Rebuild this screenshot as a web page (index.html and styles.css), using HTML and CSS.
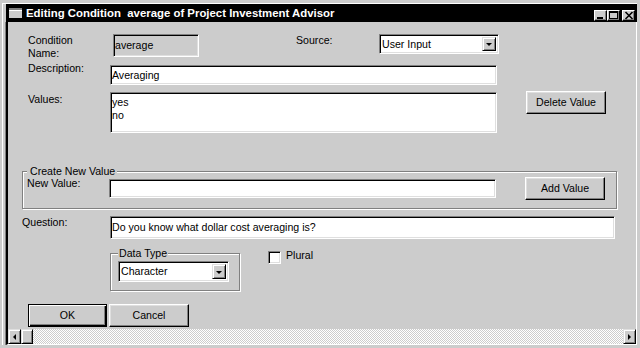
FILE: index.html
```html
<!DOCTYPE html>
<html lang="en">
  <head>
    <meta charset="UTF-8" />
    <title>Editing Condition</title>
    <link rel="stylesheet" href="styles.css">
  </head>
  <body>
    <div class="window">
      <div class="titlebar">
        <span class="app-icon"></span>
        <span class="title">Editing Condition&nbsp; average of Project Investment Advisor</span>
        <div class="caption-btns">
          <span class="cbtn">
            <svg width="11" height="9" viewBox="0 0 11 9"><rect x="2" y="6" width="6" height="2" fill="#000"/></svg>
          </span>
          <span class="cbtn">
            <svg width="11" height="9" viewBox="0 0 11 9"><rect x="1.5" y="0.5" width="8" height="7" fill="none" stroke="#000"/><rect x="1" y="0" width="9" height="2" fill="#000"/></svg>
          </span>
          <span class="cbtn close">
            <svg width="10" height="9" viewBox="0 0 10 9"><path d="M1.5 1 L8.5 8 M8.5 1 L1.5 8" stroke="#000" stroke-width="1.6"/></svg>
          </span>
        </div>
      </div>

      <div class="panel">
        <div class="form">
          <div class="row row-name">
            <div class="lbl in">Condition<br />Name:</div>
            <div class="field readonly name-field">average</div>
            <div class="lbl source-lbl">Source:</div>
            <div class="combo source-combo">
              <span class="combo-text">User Input</span>
              <span class="drop-btn"><span class="tri-down"></span></span>
            </div>
          </div>

          <div class="row row-desc">
            <div class="lbl in up">Description:</div>
            <div class="field wide">Averaging</div>
          </div>

          <div class="row row-values">
            <div class="lbl in down">Values:</div>
            <div class="field wide listbox">yes<br />no</div>
            <button class="btn side-btn delete-btn">Delete Value</button>
          </div>

          <fieldset class="group new-value">
            <legend>Create New Value</legend>
            <div class="row">
              <div class="lbl">New Value:</div>
              <div class="field wide new-field"></div>
              <button class="btn side-btn">Add Value</button>
            </div>
          </fieldset>

          <div class="row row-question">
            <div class="lbl">Question:</div>
            <div class="field question-field">Do you know what dollar cost averaging is?</div>
          </div>

          <div class="row row-type">
            <fieldset class="group data-type">
              <legend>Data Type</legend>
              <div class="combo type-combo">
                <span class="combo-text">Character</span>
                <span class="drop-btn"><span class="tri-down"></span></span>
              </div>
            </fieldset>
            <span class="checkbox"></span>
            <span class="check-label">Plural</span>
          </div>

          <div class="row row-buttons">
            <button class="btn default-btn">OK</button>
            <button class="btn">Cancel</button>
          </div>
        </div>

        <div class="hscroll">
          <span class="sbtn"><span class="tri-left"></span></span>
          <span class="sbtn thumb"></span>
          <span class="track"></span>
          <span class="sbtn"><span class="tri-right"></span></span>
        </div>
      </div>
    </div>
  </body>
</html>
```

FILE: styles.css
```css
* {
  box-sizing: border-box;
}

body {
  margin: 0;
  background: #cccccc;
  font-family: "Liberation Sans", Arial, sans-serif;
  font-size: 10.6px;
  line-height: 13px;
  color: #000;
  overflow: hidden;
}

.window {
  width: 635px;
  margin: 3px 0 0 2px;
  padding-left: 3px;
  border-top: 1px solid #fff;
  border-left: 1px solid #fff;
}

.titlebar {
  height: 18px;
  background: #000;
  display: flex;
  align-items: center;
  padding-right: 2px;
}

.app-icon {
  width: 13px;
  height: 10px;
  margin-left: 3px;
  background: #cccccc;
  border-top: 2px solid #808080;
  box-shadow: inset 0 1px #fff;
}

.title {
  margin-left: 4px;
  color: #fff;
  font-weight: bold;
  font-size: 11.4px;
  white-space: nowrap;
}

.caption-btns {
  margin-left: auto;
  display: flex;
  align-self: flex-end;
  margin-bottom: 1px;
}

.cbtn {
  width: 13px;
  height: 11px;
  background: #cccccc;
  border: 1px solid;
  border-color: #fff #000 #000 #fff;
  box-shadow: inset -1px -1px #808080;
  display: flex;
  align-items: center;
  justify-content: center;
}

.cbtn.close {
  width: 13px;
  margin-left: 2px;
}

.panel {
  width: 631px;
  height: 323px;
  border-left: 2px solid #000;
  border-right: 1px solid #fff;
  border-bottom: 1px solid #fff;
  box-shadow: -1px 0 #808080;
  display: flex;
  flex-direction: column;
}

.form {
  flex: 1;
  padding: 12px 0 0 14px;
}

.row {
  display: flex;
  align-items: flex-start;
}

.lbl {
  width: 88px;
  flex-shrink: 0;
}

.lbl.in {
  padding-left: 6px;
}

.lbl.up {
  margin-top: -3px;
}

.lbl.down {
  margin-top: 1px;
}

/* sunken edit fields */
.field {
  background: #fff;
  border: 1px solid;
  border-color: #808080 #fff #fff #808080;
  box-shadow: inset 1px 1px #000, inset -1px -1px #dfdfdf;
  padding: 0 1px;
  display: flex;
  align-items: center;
  white-space: nowrap;
}

.field.readonly {
  background: #cccccc;
}

.row-name {
  height: 23px;
}

.name-field {
  width: 86px;
  height: 23px;
  margin-left: 3px;
}

.source-lbl {
  width: 83px;
  margin-left: 97px;
}

.combo {
  background: #fff;
  border: 1px solid;
  border-color: #808080 #fff #fff #808080;
  box-shadow: inset 1px 1px #000, inset -1px -1px #dfdfdf;
  display: flex;
  align-items: center;
  padding: 2px 2px 2px 2px;
}

.combo-text {
  flex: 1;
}

.source-combo {
  width: 120px;
  height: 20px;
}

.drop-btn {
  width: 14px;
  height: 100%;
  background: #cccccc;
  border: 1px solid;
  border-color: #dfdfdf #000 #000 #dfdfdf;
  box-shadow: inset 1px 1px #fff, inset -1px -1px #808080;
  display: flex;
  align-items: center;
  justify-content: center;
}

.tri-down {
  border-left: 3px solid transparent;
  border-right: 3px solid transparent;
  border-top: 3px solid #000;
  margin-top: 1px;
}

.row-desc {
  height: 20px;
  margin-top: 8px;
}

.wide {
  width: 387px;
  height: 20px;
}

.row-values {
  height: 41px;
  margin-top: 7px;
}

.listbox {
  height: 41px;
  align-items: flex-start;
  padding-top: 3px;
}

.btn {
  font: inherit;
  color: #000;
  height: 23px;
  width: 80px;
  padding: 0;
  background: #cccccc;
  border: 1px solid;
  border-color: #fff #000 #000 #fff;
  box-shadow: inset -1px -1px #808080, inset 1px 1px #dfdfdf;
}

.side-btn {
  margin-left: 29px;
}

.delete-btn {
  margin-top: -1px;
}

/* etched group boxes */
.group {
  margin: 0;
  border: 1px solid #808080;
  box-shadow: inset 1px 1px #fff, 1px 1px #fff;
}

.group legend {
  line-height: 11px;
  background: #cccccc;
}

.new-value {
  width: 595px;
  margin-top: 33px;
  padding: 0 0 8px 4px;
}

.new-value legend {
  padding: 0 2px 0 3px;
}

.new-value .lbl {
  width: 82px;
}

.new-field {
  height: 19px;
  margin-top: 2px;
}

.row-question {
  height: 23px;
  margin-top: 7px;
}

.question-field {
  width: 505px;
  height: 23px;
}

.row-type {
  margin-top: 9px;
  height: 43px;
}

.data-type {
  width: 130px;
  margin-left: 88px;
  padding: 0 0 8px 7px;
}

.data-type legend {
  padding: 0 1px;
}

.type-combo {
  width: 111px;
  height: 21px;
  margin-top: 2px;
}

.checkbox {
  width: 13px;
  height: 13px;
  margin: 3px 0 0 28px;
  background: #fff;
  border: 1px solid;
  border-color: #808080 #fff #fff #808080;
  box-shadow: inset 1px 1px #000, inset -1px -1px #dfdfdf;
}

.check-label {
  margin: 1px 0 0 5px;
}

.row-buttons {
  margin-top: 13px;
}

.default-btn {
  width: 79px;
  margin-left: 6px;
  margin-right: 2px;
  border: 1px solid #000;
  box-shadow: inset 1px 1px #fff, inset -1px -1px #000, inset -2px -2px #808080;
}

/* horizontal scrollbar */
.hscroll {
  height: 15px;
  display: flex;
}

.sbtn {
  width: 13px;
  height: 15px;
  background: #cccccc;
  border: 1px solid;
  border-color: #dfdfdf #000 #000 #dfdfdf;
  box-shadow: inset 1px 1px #fff, inset -1px -1px #808080;
  display: flex;
  align-items: center;
  justify-content: center;
}

.sbtn.thumb {
  width: 12px;
}

.track {
  flex: 1;
  background: repeating-conic-gradient(#fff 0 25%, #cccccc 0 50%) 0 0 / 2px 2px;
}

.tri-left {
  border-top: 3px solid transparent;
  border-bottom: 3px solid transparent;
  border-right: 3px solid #000;
}

.tri-right {
  border-top: 3px solid transparent;
  border-bottom: 3px solid transparent;
  border-left: 3px solid #000;
}
```
